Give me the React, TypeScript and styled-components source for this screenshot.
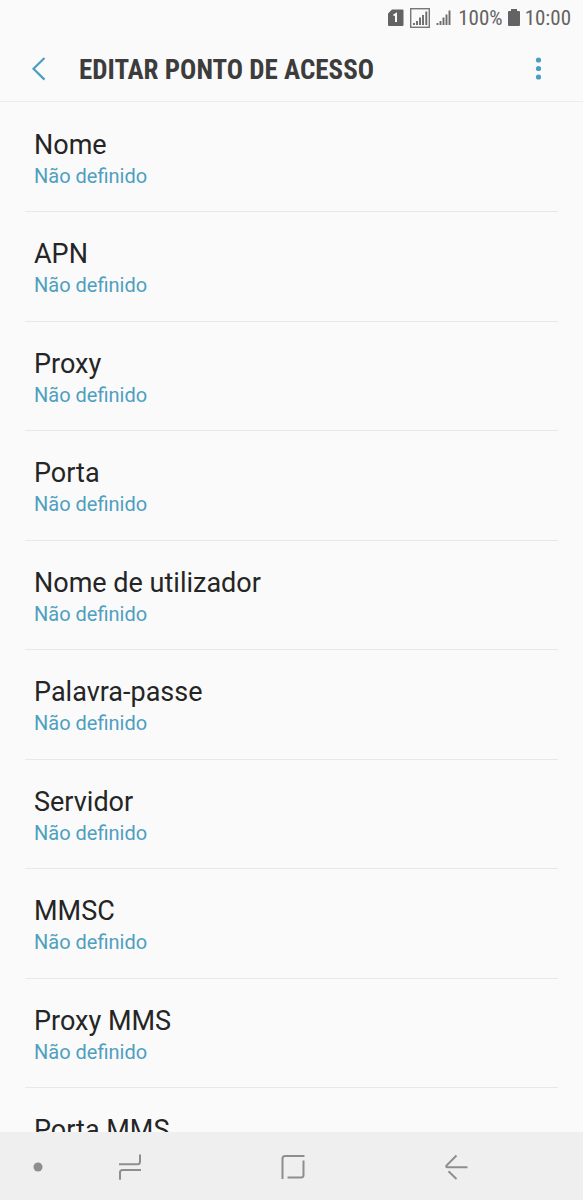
import React from "react";
import styled, { createGlobalStyle } from "styled-components";

const GlobalStyle = createGlobalStyle`
  *, *::before, *::after { box-sizing: border-box; }
  body { margin: 0; background: #fafafa; }
  button { margin: 0; padding: 0; border: 0; background: none; color: inherit; font: inherit; cursor: pointer; }
  svg { display: block; }
`;

const condensed = `"Roboto Condensed", Roboto, sans-serif`;

const Screen = styled.div`
  display: flex;
  flex-direction: column;
  height: 100vh;
  overflow: hidden;
  background: #fafafa;
  color: #252525;
  font-family: Roboto, sans-serif;
`;

const StatusBar = styled.div`
  display: flex;
  flex: none;
  align-items: center;
  justify-content: flex-end;
  gap: 5px;
  height: 36px;
  padding-right: 12px;
  color: #636363;
  font-family: ${condensed};
  font-size: 21px;
  line-height: 36px;
`;

const Indicators = styled.div`
  display: flex;
  align-items: center;
  gap: 6px;
  padding-right: 2px;
`;

const AppBar = styled.header`
  display: flex;
  flex: none;
  align-items: center;
  height: 66px;
  padding: 0 25px;
  border-bottom: 1px solid #ececec;
`;

const BarButton = styled.button`
  display: grid;
  place-items: center;
  width: 40px;
  height: 40px;
  color: #4a9fc0;
`;

const Title = styled.h1`
  flex: 1;
  margin: 0;
  padding: 2px 0 0 14px;
  color: #3c3c3c;
  font-family: ${condensed};
  font-size: 27px;
  font-weight: 700;
  line-height: 32px;
  white-space: nowrap;
`;

const Settings = styled.ul`
  display: grid;
  flex: 1;
  grid-auto-rows: 109px 110px;
  min-height: 0;
  margin: 0;
  padding: 1px 25px 0;
  overflow-y: auto;
  list-style: none;
  scrollbar-width: none;
`;

const Setting = styled.li`
  border-bottom: 1px solid #e8e8e8;
`;

const SettingButton = styled.button`
  display: flex;
  flex-direction: column;
  width: 100%;
  height: 100%;
  padding: 26px 9px 0;
  text-align: left;
`;

const Label = styled.span`
  font-size: 27px;
  line-height: 32px;
`;

const Value = styled.span`
  color: #4f9fbf;
  font-size: 20px;
  line-height: 30px;
`;

const NavBar = styled.nav`
  display: grid;
  flex: none;
  grid-template-columns: 76fr 108fr 218fr 108fr 73fr;
  height: 68px;
  padding-top: 2px;
  background: #efefef;
  color: #8e8e8e;
`;

const NavButton = styled.button`
  display: grid;
  place-items: center;
`;

const settings = [
  "Nome",
  "APN",
  "Proxy",
  "Porta",
  "Nome de utilizador",
  "Palavra-passe",
  "Servidor",
  "MMSC",
  "Proxy MMS",
  "Porta MMS",
];

const SimIcon = () => (
  <svg width="16" height="18" viewBox="0 0 16 18" aria-hidden="true">
    <path d="M4 0.500h10.500a1 1 0 0 1 1 1v14.500a1 1 0 0 1-1 1H1a1 1 0 0 1-1-1V4.500z" fill="#636363" />
    <path d="M5.500 6.500l2.500-1.500V13" fill="none" stroke="#fafafa" strokeWidth="2" />
  </svg>
);

const BoxedSignalIcon = () => (
  <svg width="20" height="20" viewBox="0 0 20 20" aria-hidden="true">
    <rect x=".7" y=".7" width="18.600" height="18.600" fill="none" stroke="#777" strokeWidth="1.400" />
    <path d="M4 17v-2M7 17v-4M10 17V9.500M13 17V7M16.300 17V3.500" stroke="#6c6c6c" strokeWidth="1.900" />
  </svg>
);

const SignalIcon = () => (
  <svg width="15" height="16" viewBox="0 0 15 16" aria-hidden="true">
    <path d="M1.500 15v-2M4.500 15v-4M7.500 15V7.500M10.500 15V4.500M13.500 15V.5" stroke="#6c6c6c" strokeWidth="1.900" />
  </svg>
);

const BatteryIcon = () => (
  <svg width="12" height="18" viewBox="0 0 12 18" aria-hidden="true">
    <path d="M3 0h6v2h2q1 0 1 1v13q0 1-1 1H1q-1 0-1-1V3q0-1 1-1h2z" fill="#636363" />
  </svg>
);

export default function App() {
  return (
    <Screen>
      <GlobalStyle />
      <StatusBar>
        <Indicators>
          <SimIcon />
          <BoxedSignalIcon />
          <SignalIcon />
        </Indicators>
        <span>100%</span>
        <BatteryIcon />
        <time>10:00</time>
      </StatusBar>
      <AppBar>
        <BarButton type="button" aria-label="Voltar">
          <svg width="40" height="40" viewBox="0 0 40 40" fill="none" stroke="currentColor" strokeWidth="2.200">
            <path d="M19.500 9L8.500 19.800L19.500 30.600" />
          </svg>
        </BarButton>
        <Title>EDITAR PONTO DE ACESSO</Title>
        <BarButton type="button" aria-label="Mais opções">
          <svg width="40" height="40" viewBox="0 0 40 40" fill="currentColor">
            <circle cx="20.500" cy="11" r="2.600" />
            <circle cx="20.500" cy="19.500" r="2.600" />
            <circle cx="20.500" cy="28" r="2.600" />
          </svg>
        </BarButton>
      </AppBar>
      <Settings>
        {settings.map((name) => (
          <Setting key={name}>
            <SettingButton type="button">
              <Label>{name}</Label>
              <Value>Não definido</Value>
            </SettingButton>
          </Setting>
        ))}
      </Settings>
      <NavBar>
        <NavButton type="button" aria-label="Ocultar barra">
          <svg width="10" height="10" viewBox="0 0 10 10" fill="currentColor">
            <circle cx="5" cy="5" r="4.500" />
          </svg>
        </NavButton>
        <NavButton type="button" aria-label="Recentes">
          <svg width="24" height="28" viewBox="0 0 24 28" fill="none" stroke="currentColor" strokeWidth="2">
            <path d="M1 11.300H19.500Q22 11.300 22 8.800V1.500M23 17H4.500Q2 17 2 19.500V26.800" />
          </svg>
        </NavButton>
        <NavButton type="button" aria-label="Início">
          <svg width="24" height="26" viewBox="0 0 24 26" fill="none" stroke="currentColor" strokeWidth="2">
            <path d="M1.500 25V4.500Q1.500 2 4 2H23.500M22.500 6.500V21Q22.500 23.500 20 23.500H6.500" />
          </svg>
        </NavButton>
        <NavButton type="button" aria-label="Retroceder">
          <svg width="24" height="26" viewBox="0 0 24 26" fill="none" stroke="currentColor" strokeWidth="2">
            <path d="M12.500 1.500L2.500 11.500Q1.500 13.300 3.500 13.300H23.500M4.500 17.200L12.500 25" />
          </svg>
        </NavButton>
      </NavBar>
    </Screen>
  );
}
